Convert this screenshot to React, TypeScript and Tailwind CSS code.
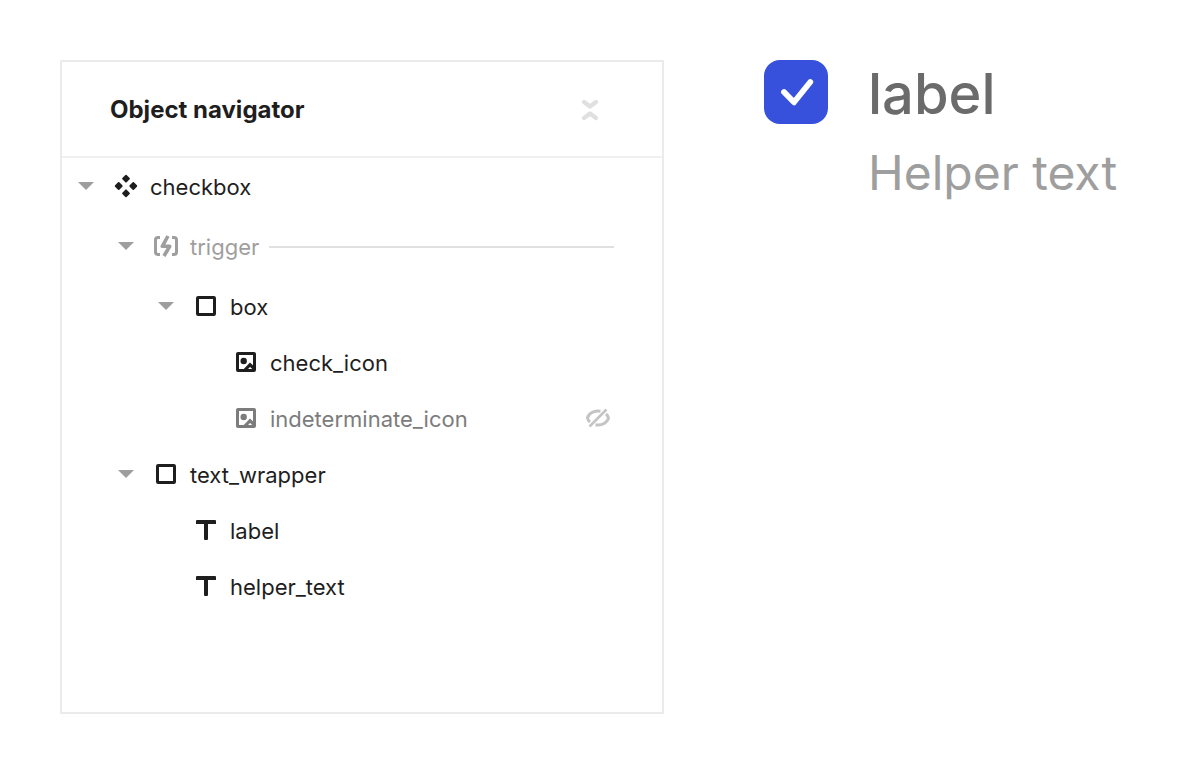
import { useState, type ReactNode } from "react";

type IconKind = "component" | "trigger" | "frame" | "image" | "text";

type Row = {
  name: string;
  icon: IconKind;
  indent: string;
  tone: string;
  expandable?: boolean;
  spaced?: boolean;
  ruled?: boolean;
  hidden?: boolean;
};

const rows: Row[] = [
  { name: "checkbox", icon: "component", indent: "pl-2", tone: "text-[#1e1e1e]", expandable: true, spaced: true },
  { name: "trigger", icon: "trigger", indent: "pl-12", tone: "text-[#9e9e9e]", expandable: true, spaced: true, ruled: true },
  { name: "box", icon: "frame", indent: "pl-22", tone: "text-[#1e1e1e]", expandable: true },
  { name: "check_icon", icon: "image", indent: "pl-32", tone: "text-[#1e1e1e]" },
  { name: "indeterminate_icon", icon: "image", indent: "pl-32", tone: "text-[#7c7c7c]", hidden: true },
  { name: "text_wrapper", icon: "frame", indent: "pl-12", tone: "text-[#1e1e1e]", expandable: true },
  { name: "label", icon: "text", indent: "pl-22", tone: "text-[#1e1e1e]" },
  { name: "helper_text", icon: "text", indent: "pl-22", tone: "text-[#1e1e1e]" },
];

const glyphs: Record<IconKind, ReactNode> = {
  component: (
    <g fill="currentColor" stroke="currentColor" strokeWidth="1.8" strokeLinejoin="round">
      <path d="M16 5.700 19 8.700 16 11.700 13 8.700Z" />
      <path d="M16 20.300 19 23.300 16 26.300 13 23.300Z" />
      <path d="M8.700 13 11.700 16 8.700 19 5.700 16Z" />
      <path d="M23.300 13 26.300 16 23.300 19 20.300 16Z" />
    </g>
  ),
  trigger: (
    <g fill="none" stroke="currentColor" strokeWidth="3">
      <path d="M10 7.500H8A2.500 2.500 0 0 0 5.500 10V22A2.500 2.500 0 0 0 8 24.500H10" />
      <path d="M22 7.500H24A2.500 2.500 0 0 1 26.500 10V22A2.500 2.500 0 0 1 24 24.500H22" />
      <path d="M18 6 12.300 16.300H19.700L14 26" strokeWidth="3.600" strokeLinejoin="round" />
    </g>
  ),
  frame: <rect x="7.500" y="7.500" width="17" height="17" rx="0.700" fill="none" stroke="currentColor" strokeWidth="3" />,
  image: (
    <g>
      <rect x="7.500" y="7.500" width="17" height="17" rx="0.500" fill="none" stroke="currentColor" strokeWidth="3" />
      <circle cx="13.700" cy="15" r="3.200" fill="currentColor" />
      <path d="M14.500 24.500 20 18.700 24.500 23" fill="none" stroke="currentColor" strokeWidth="3.200" />
    </g>
  ),
  text: <path d="M7 6H25Q26 6 26 7V10H18V25Q18 26 17 26H15Q14 26 14 25V10H6V7Q6 6 7 6Z" fill="currentColor" />,
};

function TreeRow({ row }: { row: Row }) {
  return (
    <li className={`flex h-14 items-center gap-2 pr-12 ${row.indent} ${row.tone} ${row.spaced ? "mb-1" : ""}`}>
      {row.expandable ? (
        <button type="button" aria-label={`Collapse ${row.name}`} aria-expanded="true" className="size-8 shrink-0 text-[#9e9e9e]">
          <svg viewBox="0 0 32 32" className="size-8" aria-hidden="true">
            <path d="M8 12H24L16 20Z" fill="currentColor" />
          </svg>
        </button>
      ) : (
        <span className="size-8 shrink-0" />
      )}
      <svg viewBox="0 0 32 32" className="size-8 shrink-0" aria-hidden="true">
        {glyphs[row.icon]}
      </svg>
      <span className="pt-0.5 text-[22px] leading-8">{row.name}</span>
      {row.ruled && (
        <span className="flex-1 pt-0.5 pl-0.5">
          <span className="block h-0.5 bg-[#e0e0e0]" />
        </span>
      )}
      {row.hidden && (
        <button type="button" aria-label={`Show ${row.name}`} className="ml-auto size-8 text-[#c4c4c4]">
          <svg viewBox="0 0 32 32" className="size-8" aria-hidden="true">
            <g fill="none" stroke="currentColor" strokeWidth="3">
              <path d="M18.500 9.300C11 8 6.200 12.500 5.500 16 5.800 17.500 6.500 18.700 8 20" />
              <path d="M13.500 22.700C21 24 25.800 19.500 26.500 16 26.200 14.500 25.500 13.300 24 12" />
              <path d="M7.500 24.500 24.500 7.500" strokeWidth="2.500" />
            </g>
          </svg>
        </button>
      )}
    </li>
  );
}

export default function App() {
  const [checked, setChecked] = useState(true);
  return (
    <main className="flex min-h-screen items-start gap-25 bg-white p-15 pr-6 font-['Inter',sans-serif]">
      <section className="max-w-151 flex-1 border-2 border-[#ebebeb] pb-[98px]">
        <header className="flex h-24 items-center justify-between border-b-2 border-[#f0f0f0] pt-0.5 pr-14 pl-12">
          <h1 className="text-2xl font-bold text-[#1e1e1e]">Object navigator</h1>
          <button type="button" aria-label="Collapse all" className="size-8 text-[#e0e0e0]">
            <svg viewBox="0 0 32 32" className="size-8" aria-hidden="true">
              <path d="M10 8 16 12.500 22 8M10 24 16 19.500 22 24" fill="none" stroke="currentColor" strokeWidth="4.300" strokeLinecap="round" strokeLinejoin="round" />
            </svg>
          </button>
        </header>
        <ul>
          {rows.map((row) => (
            <TreeRow key={row.name} row={row} />
          ))}
        </ul>
      </section>

      <section className="flex items-start gap-10">
        <span className="grid size-16 shrink-0">
          <input
            id="option"
            type="checkbox"
            aria-describedby="option-help"
            checked={checked}
            onChange={(e) => setChecked(e.target.checked)}
            className="peer col-start-1 row-start-1 size-16 appearance-none rounded-2xl border-2 border-[#3851dd] checked:bg-[#3851dd]"
          />
          <svg viewBox="0 0 64 64" className="pointer-events-none invisible col-start-1 row-start-1 size-16 peer-checked:visible" aria-hidden="true">
            <path d="M20 32 30 42.300 46.300 22" fill="none" stroke="white" strokeWidth="5.800" strokeLinecap="round" strokeLinejoin="round" />
          </svg>
        </span>
        <div className="flex flex-col gap-3">
          <label htmlFor="option" className="text-[56px] leading-17 font-medium text-[#6b6b6b]">
            label
          </label>
          <p id="option-help" className="text-5xl leading-[66px] whitespace-nowrap text-[#9e9e9e]">
            Helper text
          </p>
        </div>
      </section>
    </main>
  );
}
